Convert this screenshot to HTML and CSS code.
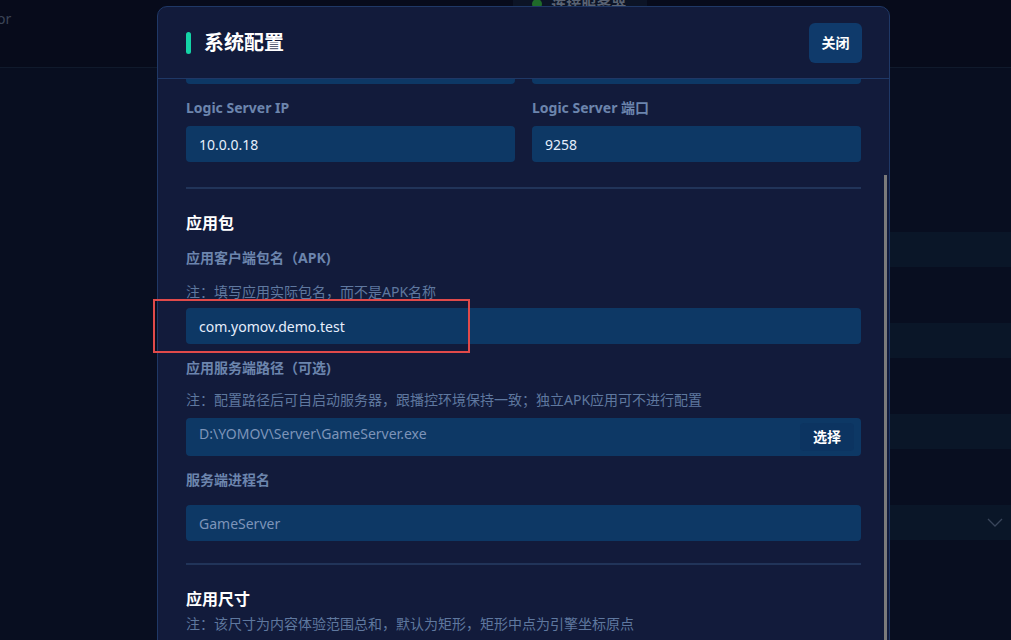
FILE: index.html
```html
<!DOCTYPE html>
<html lang="zh-CN">
<head>
<meta charset="utf-8">
<title>系统配置</title>
<link rel="stylesheet" href="styles.css">
</head>
<body>
  <div class="app">
    <header class="topbar">
      <span class="brand">Editor</span>
      <div class="status"><i class="status-dot"></i><span>连接服务器</span></div>
    </header>
    <main class="rows">
      <div class="row"></div>
      <div class="row"></div>
      <div class="row"></div>
      <div class="row row-select">
        <svg class="chev" width="16" height="9" viewBox="0 0 16 9"><path d="M1 1l7 7 7-7" fill="none" stroke="currentColor" stroke-width="1.3"/></svg>
      </div>
    </main>
  </div>

  <section class="modal">
    <header class="modal-head">
      <h1 class="modal-title"><i class="title-bar"></i>系统配置</h1>
      <button class="btn-close">关闭</button>
    </header>
    <div class="modal-body">
      <div class="scroll-content">
        <div class="grid2">
          <div class="input"></div>
          <div class="input"></div>
        </div>
        <div class="grid2 gap-row">
          <div class="field">
            <label class="label">Logic Server IP</label>
            <div class="input">10.0.0.18</div>
          </div>
          <div class="field">
            <label class="label">Logic Server 端口</label>
            <div class="input">9258</div>
          </div>
        </div>

        <hr class="divider div-1">

        <h2 class="section-title st-1">应用包</h2>
        <label class="label l-apk">应用客户端包名（APK)</label>
        <p class="note n-apk">注：填写应用实际包名，而不是APK名称</p>
        <div class="input i-apk">com.yomov.demo.test</div>

        <label class="label l-path">应用服务端路径（可选)</label>
        <p class="note n-path">注：配置路径后可自启动服务器，跟播控环境保持一致；独立APK应用可不进行配置</p>
        <div class="input input-file i-path"><span class="muted">D:\YOMOV\Server\GameServer.exe</span><button class="btn-pick">选择</button></div>

        <label class="label l-proc">服务端进程名</label>
        <div class="input i-proc"><span class="muted">GameServer</span></div>

        <hr class="divider div-2">

        <h2 class="section-title st-2">应用尺寸</h2>
        <p class="note n-size">注：该尺寸为内容体验范围总和，默认为矩形，矩形中点为引擎坐标原点</p>
      </div>
      <i class="scroll-thumb"></i>
    </div>
  </section>

  <div class="highlight"></div>
</body>
</html>
```
FILE: styles.css
```css
* { box-sizing: border-box; }

html, body {
  margin: 0;
  height: 100%;
}

body {
  background: #080e20;
  font-family: "Noto Sans", "Noto Sans CJK SC", sans-serif;
  color: #e6eefc;
  overflow: hidden;
  position: relative;
}

/* background application */
.topbar {
  height: 68px;
  background: #070b1b;
  border-bottom: 1px solid #101a2c;
  display: flex;
  align-items: flex-start;
}

.brand {
  margin-left: -28px;
  margin-top: 9px;
  font-size: 14px;
  line-height: 20px;
  color: #3c4557;
}

.status {
  margin-left: 502px;
  margin-top: -14px;
  width: 134px;
  height: 36px;
  background: #0c1426;
  border-radius: 6px;
  display: flex;
  align-items: center;
  gap: 9px;
  padding-left: 19px;
  font-size: 15px;
  font-weight: 700;
  color: #5a6373;
}

.status-dot {
  width: 10px;
  height: 10px;
  border-radius: 50%;
  background: #1f6b2a;
}

.rows {
  padding-top: 164px;
  display: flex;
  flex-direction: column;
  gap: 56px;
  align-items: flex-end;
}

.row {
  width: 500px;
  height: 35px;
  background: #0a1628;
  display: flex;
  align-items: center;
  justify-content: flex-end;
}

.chev {
  color: #39455a;
  margin-right: 8px;
}

/* modal */
.modal {
  position: absolute;
  left: 157px;
  top: 6px;
  width: 733px;
  height: 700px;
  background: #121b3b;
  border: 1px solid #1f3866;
  border-radius: 10px 10px 0 0;
  display: flex;
  flex-direction: column;
}

.modal-head {
  height: 72px;
  flex: none;
  border-bottom: 1px solid #1f3866;
  display: flex;
  align-items: center;
  justify-content: space-between;
  padding: 0 27px 0 28px;
}

.modal-title {
  margin: 0;
  display: flex;
  align-items: center;
  font-size: 20px;
  line-height: 28px;
  font-weight: 700;
  color: #ffffff;
}

.title-bar {
  width: 5px;
  height: 22px;
  border-radius: 3px;
  background: #14d3a6;
  margin-right: 13px;
}

.btn-close {
  width: 53px;
  height: 40px;
  border: 0;
  border-radius: 6px;
  background: #0f3a6b;
  color: #ffffff;
  font: 700 14px/20px "Noto Sans", "Noto Sans CJK SC", sans-serif;
  padding: 0;
}

.modal-body {
  flex: 1;
  overflow: hidden;
  position: relative;
}

/* scrolled form: the first row sits mostly above the visible area */
.scroll-content {
  margin-top: -31px;
  padding: 0 28px;
}

.grid2 {
  display: grid;
  grid-template-columns: 1fr 1fr;
  gap: 17px;
}

.gap-row { margin-top: 14px; }

.field {
  display: flex;
  flex-direction: column;
}

.label {
  display: block;
  font-size: 14px;
  line-height: 20px;
  font-weight: 700;
  color: #6c85ad;
}

.field .label { margin-bottom: 8px; }

.input {
  height: 36px;
  border-radius: 4px;
  background: #0d3865;
  padding: 0 13px;
  display: flex;
  align-items: center;
  font-size: 14px;
  color: #e6eefc;
}

.muted { color: #7d94b9; }

.divider {
  border: 0;
  height: 2px;
  background: #213459;
  margin: 0;
}

.div-1 { margin-top: 25px; }
.div-2 { margin-top: 22px; }

.section-title {
  margin: 0;
  font-size: 16px;
  line-height: 24px;
  font-weight: 700;
  color: #ffffff;
}

.st-1 { margin-top: 22px; }
.st-2 { margin-top: 22px; }

.note {
  margin: 0;
  font-size: 14px;
  line-height: 20px;
  color: #5f789f;
}

.l-apk { margin-top: 13px; }
.n-apk { margin-top: 14px; }
.i-apk { margin-top: 6px; }
.l-path { margin-top: 14px; }
.n-path { margin-top: 12px; }
.i-path { margin-top: 8px; height: 38px; }
.l-proc { margin-top: 14px; }
.i-proc { margin-top: 15px; }
.n-size { margin-top: 3px; }

.input-file {
  justify-content: space-between;
  padding-right: 7px;
  align-items: flex-start;
  padding-top: 5px;
}

.btn-pick {
  width: 54px;
  height: 28px;
  border: 0;
  border-radius: 4px;
  background: #0c3461;
  color: #ffffff;
  font: 700 14px/20px "Noto Sans", "Noto Sans CJK SC", sans-serif;
  padding: 0;
}

.input-file .muted { line-height: 22px; }

.scroll-thumb {
  position: absolute;
  right: 2px;
  top: 96px;
  width: 3px;
  height: 600px;
  background: #7b7b7b;
}

/* review annotation drawn over the package-name field */
.highlight {
  position: absolute;
  left: 153px;
  top: 299px;
  width: 317px;
  height: 54px;
  border: 2px solid #e04a4a;
}
```
